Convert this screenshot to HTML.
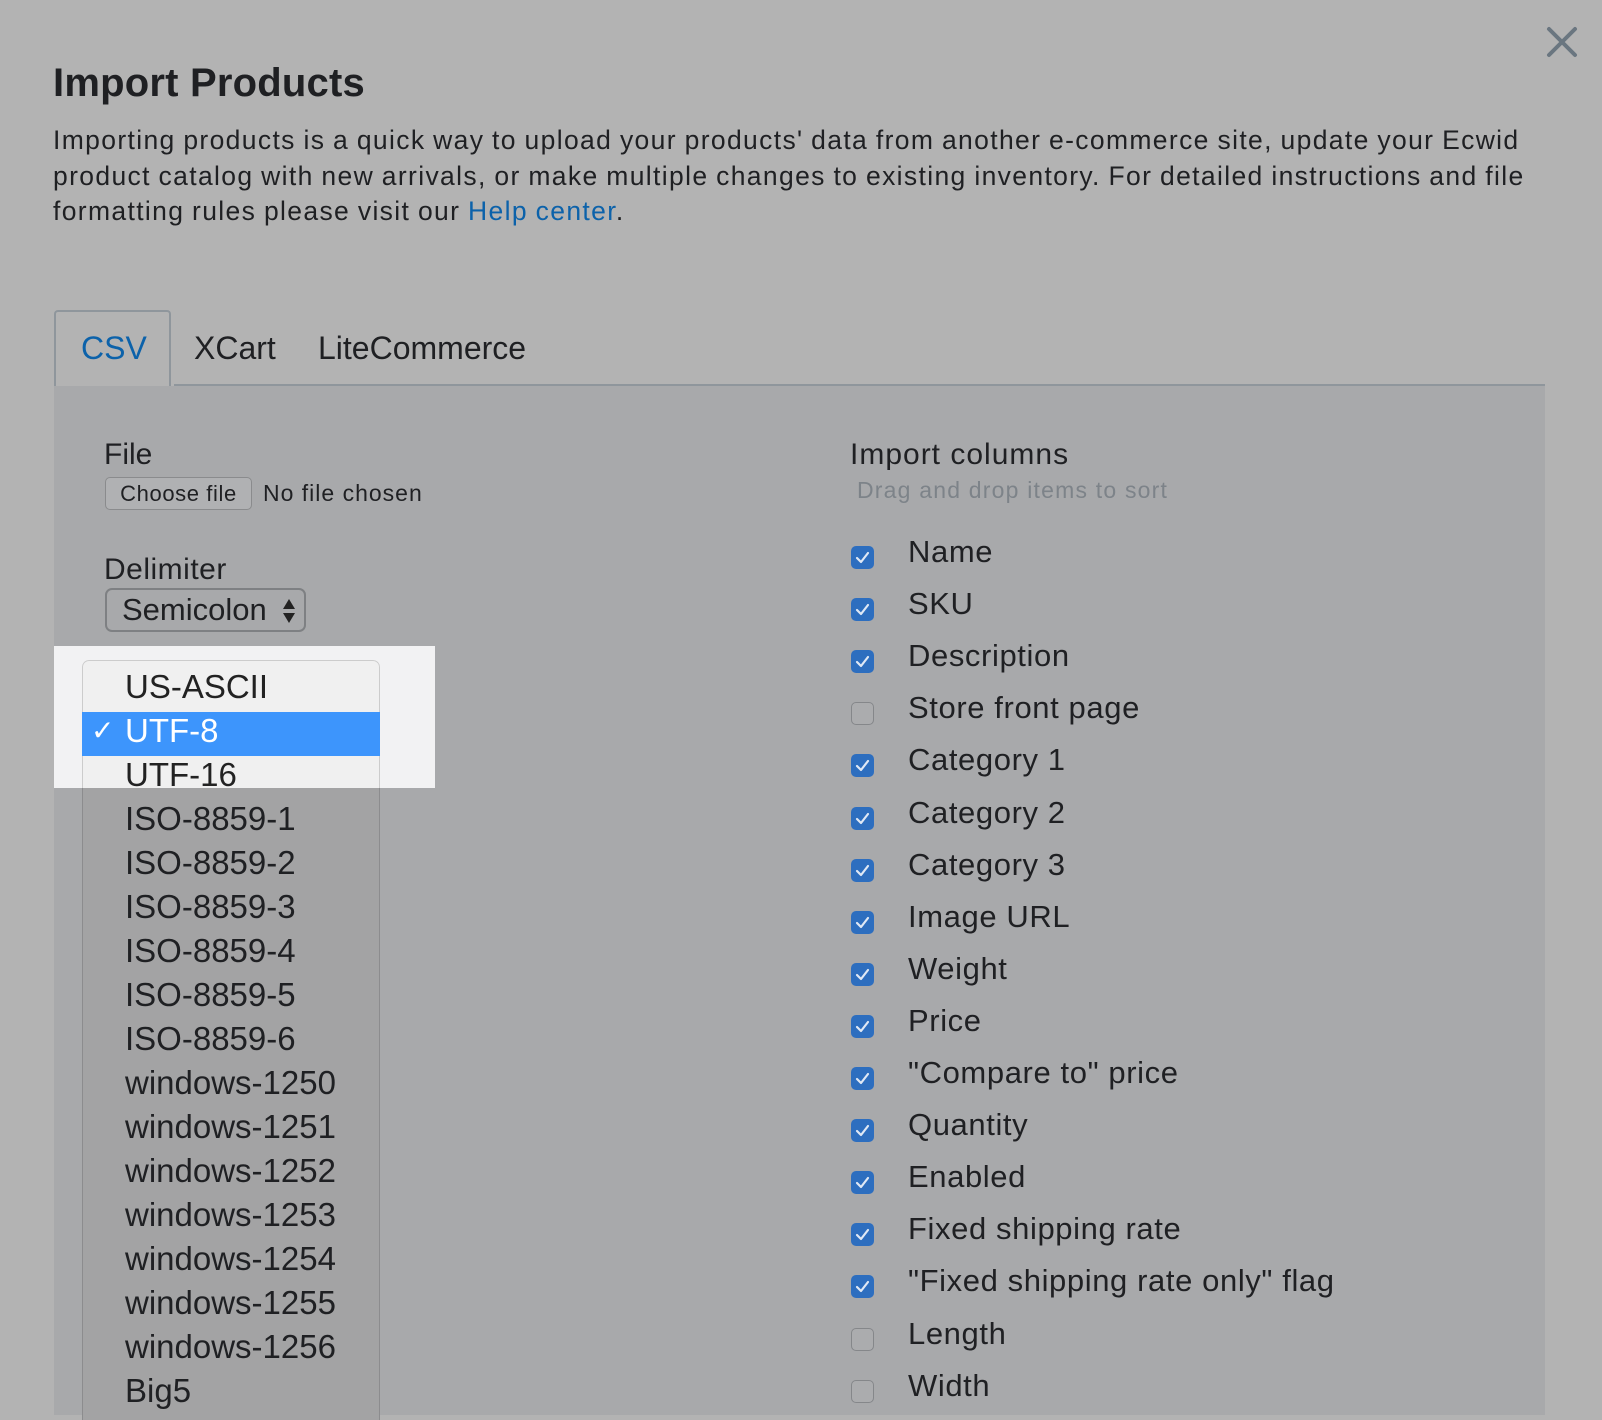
<!DOCTYPE html>
<html><head><meta charset="utf-8"><style>
*{margin:0;padding:0;box-sizing:border-box}
body{width:1602px;height:1415px;overflow:hidden;background:#b3b3b3;font-family:"Liberation Sans",sans-serif;color:#1f2023;position:relative}
.abs{position:absolute;white-space:nowrap}
h1{position:absolute;left:53px;top:61px;font-size:40px;font-weight:bold;letter-spacing:0.2px}
.p{position:absolute;left:53px;top:123px;font-size:26.5px;line-height:35.5px;white-space:nowrap;letter-spacing:1.35px;word-spacing:-1px}
.p a{color:#0c62aa;text-decoration:none}
.tabline{position:absolute;left:174px;top:384px;width:1371px;height:2px;background:#8f969c}
.tab{position:absolute;left:54px;top:310px;width:117px;height:76px;border:2px solid #8f969c;border-bottom:none;border-radius:4px 4px 0 0;background:#b3b3b3}
.tabt{position:absolute;top:330px;font-size:32px}
.panel{position:absolute;left:54px;top:386px;width:1491px;height:1029px;background:#a8a9ab}
.btn{position:absolute;left:105px;top:477px;width:147px;height:33px;border:1px solid #8a8b8d;border-radius:5px;background:#b0b1b3;font-size:22px;text-align:center;line-height:31px;letter-spacing:0.6px}
.sel{position:absolute;left:105px;top:588px;width:201px;height:44px;border:2px solid #7e8083;border-radius:7px;font-size:31px;line-height:40px;padding-left:15px}
.hl{position:absolute;left:54px;top:646px;width:381px;height:142px;background:#f2f2f3}
.dd{position:absolute;left:82px;top:660px;width:298px;height:760px;border-radius:7px 7px 0 0;overflow:hidden}
.dd .top{position:absolute;left:0;top:0;width:298px;height:128px;background:#f0f0f0;border:1px solid #ccc;border-bottom:none;border-radius:7px 7px 0 0}
.dd .bot{position:absolute;left:0;top:128px;width:298px;height:700px;background:#a3a3a4;border-left:1px solid #8c8c8e;border-right:1px solid #8c8c8e}
.it{position:absolute;left:43px;font-size:33px;line-height:44px;margin-top:-3px}
.cb{position:absolute;left:851px;width:23px;height:23px;border-radius:5px}
.on{background:#2d6ebf}
.off{border:1.5px solid #85878a;background:#abacae}
.lab{position:absolute;left:908px;font-size:31px;line-height:40px;letter-spacing:0.6px}
</style></head><body>
<svg class="abs" style="left:1545px;top:25px" width="34" height="34" viewBox="0 0 34 34"><path d="M4 4L30 30M30 4L4 30" stroke="#6a7680" stroke-width="4" stroke-linecap="round"/></svg>
<h1>Import Products</h1>
<div class="p">Importing products is a quick way to upload your products' data from another e-commerce site, update your Ecwid<br>product catalog with new arrivals, or make multiple changes to existing inventory. For detailed instructions and file<br>formatting rules please visit our <a>Help center</a>.</div>
<div class="panel"></div>
<div class="tabline"></div>
<div class="tab"></div>
<div class="tabt abs" style="left:81px;color:#0c62aa">CSV</div>
<div class="tabt abs" style="left:194px">XCart</div>
<div class="tabt abs" style="left:318px">LiteCommerce</div>
<div class="abs" style="left:104px;top:438px;font-size:30px">File</div>
<div class="btn">Choose file</div>
<div class="abs" style="left:263px;top:480px;font-size:23px;letter-spacing:1px">No file chosen</div>
<div class="abs" style="left:104px;top:553px;font-size:30px;letter-spacing:0.5px">Delimiter</div>
<div class="sel">Semicolon<svg style="position:absolute;right:8px;top:8px" width="14" height="26" viewBox="0 0 14 26"><path d="M7 1L13 11H1ZM7 25L13 15H1Z" fill="#222"/></svg></div>
<div class="hl"></div>
<div class="abs" style="left:104px;top:675px;font-size:30px">Encoding</div>
<div class="dd">
<div class="top"></div><div class="bot"></div>
<div style="position:absolute;left:0;top:52px;width:298px;height:44px;background:#3d95fc"></div>
<div class="it" style="top:8px;color:#222">US-ASCII</div>
<div class="it" style="top:52px;color:#fff">UTF-8</div>
<div class="abs" style="left:9px;top:54px;font-size:28px;color:#fff;font-family:'DejaVu Sans',sans-serif">✓</div>
<div class="it" style="top:96px;color:#222">UTF-16</div>
<div class="it" style="top:140px">ISO-8859-1</div>
<div class="it" style="top:184px">ISO-8859-2</div>
<div class="it" style="top:228px">ISO-8859-3</div>
<div class="it" style="top:272px">ISO-8859-4</div>
<div class="it" style="top:316px">ISO-8859-5</div>
<div class="it" style="top:360px">ISO-8859-6</div>
<div class="it" style="top:404px">windows-1250</div>
<div class="it" style="top:448px">windows-1251</div>
<div class="it" style="top:492px">windows-1252</div>
<div class="it" style="top:536px">windows-1253</div>
<div class="it" style="top:580px">windows-1254</div>
<div class="it" style="top:624px">windows-1255</div>
<div class="it" style="top:668px">windows-1256</div>
<div class="it" style="top:712px">Big5</div>
</div>
<div class="abs" style="left:850px;top:438px;font-size:30px;letter-spacing:1px">Import columns</div>
<div class="abs" style="left:857px;top:477px;font-size:23px;color:#7d8389;letter-spacing:1.2px">Drag and drop items to sort</div>
<div id="cols"></div>
<script>
var L=[["Name",1],["SKU",1],["Description",1],["Store front page",0],["Category 1",1],["Category 2",1],["Category 3",1],["Image URL",1],["Weight",1],["Price",1],['"Compare to" price',1],["Quantity",1],["Enabled",1],["Fixed shipping rate",1],['"Fixed shipping rate only" flag',1],["Length",0],["Width",0]];
var h="";
L.forEach(function(r,i){var c=557+i*52.1;
h+='<div class="cb '+(r[1]?'on':'off')+'" style="top:'+(c-11)+'px">'+(r[1]?'<svg width="23" height="23" viewBox="0 0 23 23"><path d="M6 12l4 4 7-9" stroke="#dfe8f5" stroke-width="2.2" fill="none" stroke-linecap="round" stroke-linejoin="round"/></svg>':'')+'</div>';
h+='<div class="lab" style="top:'+(c-25)+'px">'+r[0].replace(/"/g,'&quot;')+'</div>';});
document.getElementById("cols").innerHTML=h;
</script>
</body></html>
